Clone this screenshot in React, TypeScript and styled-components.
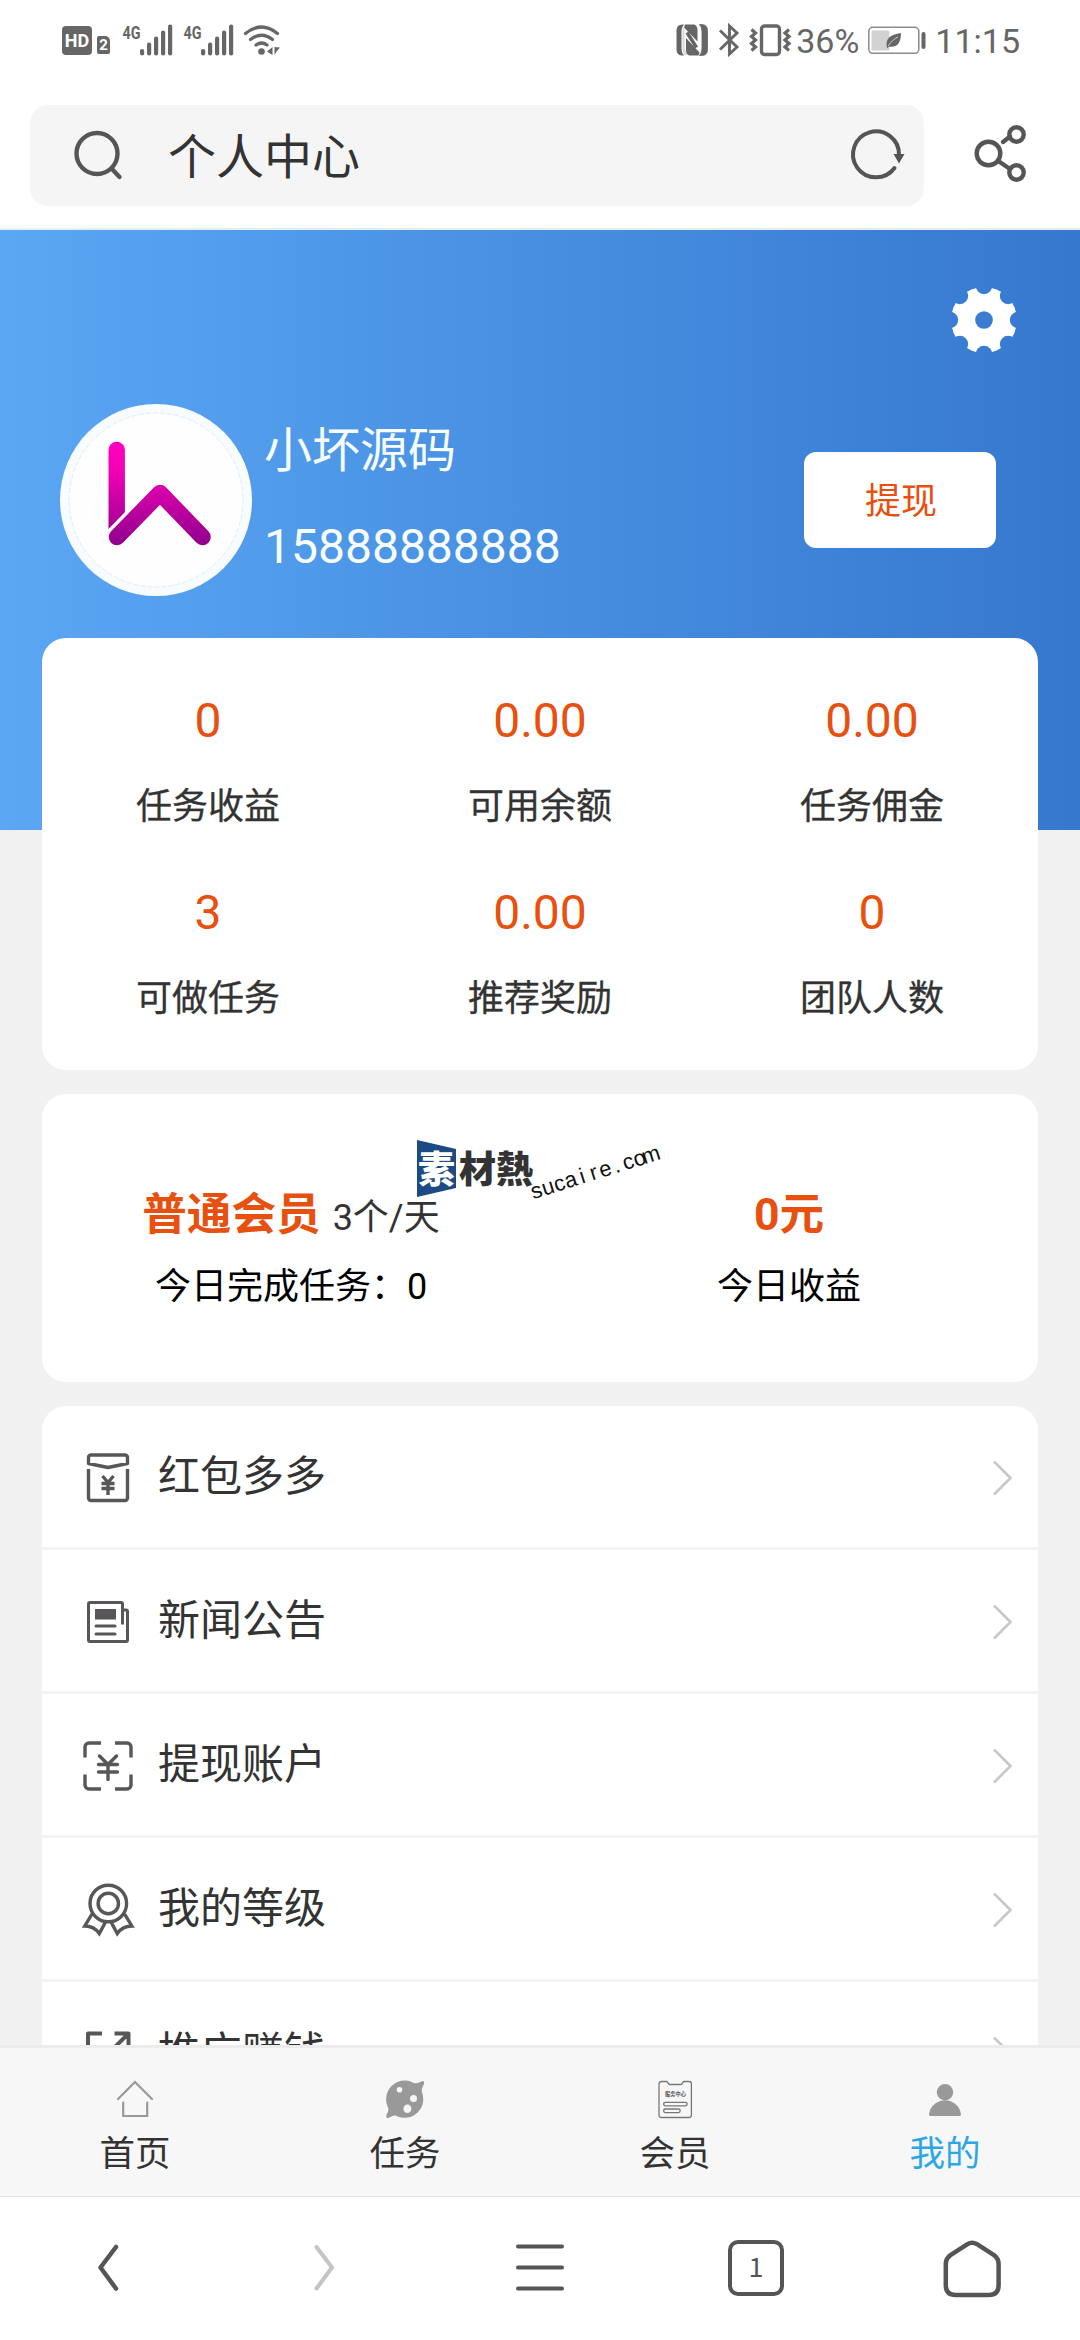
import React from "react";
import styled, { createGlobalStyle } from "styled-components";

const INK = "#333333";
const ACCENT = "#e8500f";
const STATUS = "#666666";
const LINE_ICON = "#585659";
const CHROME = "#555555";

const GlobalStyle = createGlobalStyle`
  * { box-sizing: border-box; }
  body { margin: 0; background: #fff; }
  svg { display: block; flex: none; overflow: visible; }
`;

const Screen = styled.div`
  width: 1080px;
  height: 2340px;
  display: flex;
  flex-direction: column;
  overflow: hidden;
  background: #fff;
  color: ${INK};
  font-family: Roboto, "Noto Sans CJK SC", sans-serif;
`;

/* ---------- status bar ---------- */

const StatusBar = styled.div`
  height: 80px;
  flex: none;
  display: flex;
  align-items: center;
  justify-content: space-between;
  padding: 0 60px 0 62px;
  color: ${STATUS};
`;

const StatusGroup = styled.div<{ $gap: number }>`
  display: flex;
  align-items: center;
  gap: ${(p) => p.$gap}px;
`;

const HdBadge = styled.span`
  width: 30px;
  height: 29px;
  margin: 1px -5px 0 0;
  border-radius: 4px;
  background: ${STATUS};
  color: #fff;
  font: 700 18px/29px Roboto, sans-serif;
  text-align: center;
`;

const SimBadge = styled.span`
  width: 13px;
  height: 18px;
  margin: 10px 2px 0 0;
  border-radius: 2px 5px 2px 2px;
  background: ${STATUS};
  color: #fff;
  font: 700 15px/18px Roboto, sans-serif;
  text-align: center;
`;

const StatusText = styled.span`
  font-size: 34px;
  line-height: 40px;
  padding-top: 2px;
  white-space: nowrap;
`;

const Signal = () => (
  <svg width="51" height="32" viewBox="0 0 51 32" fill={STATUS}>
    <text x="0.500" y="14.500" fontFamily="Roboto, sans-serif" fontWeight="700" fontSize="19" textLength="18" lengthAdjust="spacingAndGlyphs">
      4G
    </text>
    <rect x="18" y="25" width="4.200" height="6.500" rx="2" />
    <rect x="25" y="18.500" width="4.200" height="13" rx="2" />
    <rect x="32" y="12.500" width="4.200" height="19" rx="2" />
    <rect x="39" y="6.500" width="4.200" height="25" rx="2" />
    <rect x="46" y="0.500" width="4.200" height="31" rx="2" />
  </svg>
);

const Wifi = () => (
  <svg width="38" height="32" viewBox="0 0 38 32" fill="none" stroke={STATUS} strokeWidth="3.200" strokeLinecap="round">
    <path d="M1.500 9.500Q17.500 -3.500 33.500 9.500" />
    <path d="M6.500 15.500Q17.500 7 28.500 15.500" />
    <path d="M12 21Q17.500 17 23 21" />
    <circle cx="17.500" cy="27.500" r="3.300" fill={STATUS} stroke="none" />
    <path d="M28.500 23v8l-5.500-3.500zM30.500 23v8l2-3.500l3.500-4z" fill={STATUS} stroke="none" />
  </svg>
);

const Nfc = () => (
  <svg width="32" height="32" viewBox="0 0 32 32">
    <path d="M6.500 0.500H8Q5.500 3 5.500 8V24Q5.500 29 8 31.500H6.500Q0.500 31.500 0.500 25.500V6.500Q0.500 0.500 6.500 0.500z" fill={STATUS} />
    <path d="M23.500 0.500H25.500Q31.500 0.500 31.500 6.500V25.500Q31.500 31.500 25.500 31.500H23.500Q26 29 26 24V8Q26 3 23.500 0.500z" fill={STATUS} stroke={STATUS} strokeWidth="0.800" />
    <path d="M9 0.500H18.500Q21.500 2 21.500 6V17.500L8 3.500z" fill={STATUS} />
    <path d="M22.500 31.500H13Q10 30 10 26V14L23.500 28.500z" fill={STATUS} />
    <path d="M6.500 3.500V25Q7 29.500 9 31H13Q8.500 28 8.500 23V5z" fill={STATUS} opacity="0.250" />
    <path d="M11 8.500L20.500 23.500" stroke={STATUS} strokeWidth="3.500" />
  </svg>
);

const Bluetooth = () => (
  <svg width="20" height="32" viewBox="0 0 20 32" fill="none" stroke={STATUS} strokeWidth="2.900">
    <path d="M1 6.500L18 23L10.500 30V2L18 9L1 25.500" />
  </svg>
);

const Vibrate = () => (
  <svg width="41" height="32" viewBox="0 0 41 32" fill="none" stroke={STATUS}>
    <rect x="11.500" y="2" width="18" height="28.500" rx="3" strokeWidth="3.400" />
    <path d="M1.500 5.500l4 3.500l-4 3.500l4 3.500l-4 3.500l4 3.500l-4 3.500" strokeWidth="3.200" />
    <path d="M39 5.500l-4 3.500l4 3.500l-4 3.500l4 3.500l-4 3.500l4 3.500" strokeWidth="3.200" />
  </svg>
);

const Battery = () => (
  <svg width="58" height="32" viewBox="0 0 58 32">
    <rect x="0.800" y="3.300" width="50" height="26" rx="4" fill="#fff" stroke="#8b8b8b" strokeWidth="1.500" />
    <rect x="3.500" y="6.500" width="18" height="20" rx="1.500" fill="#d2d2d2" />
    <path d="M19 24c-2-10 3-13 14-15c0 11-5 15-12 13.500l-2 2z" fill={STATUS} />
    <path d="M20 22q6-8 10-9" stroke="#d8d8d8" strokeWidth="0.900" fill="none" />
    <rect x="53.500" y="8" width="4" height="17" rx="2" fill={STATUS} />
  </svg>
);

const StatusIcons = styled.div`
  display: flex;
  gap: 11px;
  margin-right: -4px;
`;

/* ---------- address bar ---------- */

const AddressBar = styled.div`
  flex: none;
  height: 150px;
  padding: 25px 30px 22px;
  border-bottom: 2px solid #e3effa;
  display: flex;
  align-items: flex-start;
`;

const AddressField = styled.div`
  width: 894px;
  height: 101px;
  border-radius: 18px;
  background: #f5f5f5;
  display: flex;
  align-items: center;
  padding: 0 18px 0 43px;
`;

const AddressText = styled.span`
  margin-left: 43px;
  flex: 1;
  font-size: 48px;
  line-height: 60px;
  padding-top: 5px;
`;

const ShareButton = styled.div`
  margin: 19px 0 0 49px;
`;

const SearchIcon = () => (
  <svg width="52" height="52" viewBox="0 0 52 52" fill="none" stroke={CHROME} strokeWidth="4.400" strokeLinecap="round">
    <circle cx="24" cy="23.500" r="20.500" />
    <path d="M39 39L46.500 47" />
  </svg>
);

const ReloadIcon = () => (
  <svg width="56" height="52" viewBox="0 0 56 52" fill="none" stroke={CHROME} strokeWidth="4" strokeLinecap="round">
    <path d="M44.500 38A23 23 0 1 1 49 25" />
    <path d="M43.500 24h11l-5.500 9.500z" fill={CHROME} stroke="none" />
  </svg>
);

const ShareIcon = () => (
  <svg width="56" height="60" viewBox="0 0 56 60" fill="none" stroke={CHROME} strokeWidth="4.400" strokeLinecap="round">
    <circle cx="15.500" cy="29.500" r="11.800" />
    <circle cx="43.500" cy="10.500" r="7.200" />
    <circle cx="43.500" cy="48.500" r="7.200" />
    <path d="M30 18l7-5.500M26 37.500l11 7.500" />
  </svg>
);

/* ---------- page ---------- */

const Page = styled.main`
  flex: 1;
  min-height: 0;
  overflow: hidden;
  background: #f1f1f1;
`;

const Hero = styled.section`
  height: 600px;
  padding-top: 56px;
  background: linear-gradient(90deg, #5ba7f4 0%, #478fe1 50%, #3678ce 100%);
`;

const HeroTools = styled.div`
  display: flex;
  justify-content: flex-end;
  padding-right: 62px;
  margin-bottom: 50px;
`;

const Profile = styled.div`
  height: 192px;
  padding: 0 84px 0 60px;
  display: flex;
  align-items: center;
`;

const ProfileText = styled.div`
  flex: 1;
  margin-left: 12px;
  display: flex;
  flex-direction: column;
  gap: 36px;
  padding-bottom: 2px;
  color: #f8feff;
  font-size: 48px;
  line-height: 60px;
`;

const WithdrawButton = styled.button`
  width: 192px;
  height: 96px;
  padding: 0 0 5px 2px;
  border: 0;
  border-radius: 12px;
  background: #fff;
  color: ${ACCENT};
  font-family: inherit;
  font-size: 36px;
`;

const GearIcon = () => (
  <svg width="68" height="68" viewBox="-34 -34 68 68">
    <mask id="gear-cut">
      <circle r="33" fill="#fff" />
      <circle r="8.800" fill="#000" />
      {[0, 45, 90, 135, 180, 225, 270, 315].map((a) => (
        <circle key={a} cx="0" cy="-34" r="8.200" fill="#000" transform={`rotate(${a})`} />
      ))}
    </mask>
    <rect x="-34" y="-34" width="68" height="68" fill="#fff" mask="url(#gear-cut)" />
  </svg>
);

const Avatar = () => (
  <svg width="192" height="192" viewBox="0 0 192 192">
    <defs>
      <linearGradient id="brand" gradientUnits="userSpaceOnUse" x1="0" y1="38" x2="0" y2="142">
        <stop offset="0" stopColor="#ff00c0" />
        <stop offset="0.250" stopColor="#f400b6" />
        <stop offset="1" stopColor="#8e008c" />
      </linearGradient>
    </defs>
    <circle cx="96" cy="96" r="96" fill="#f9fcff" />
    <circle cx="96" cy="96" r="87" fill="#fffeff" stroke="#d5e6f0" strokeWidth="0.800" strokeDasharray="5 2" />
    <path d="M48.500 46a8.200 8.200 0 0 1 16.400 0V109L48.500 126z" fill="url(#brand)" />
    <path d="M57 133L100 89L142.500 133" fill="none" stroke="url(#brand)" strokeWidth="16.500" strokeLinecap="round" strokeLinejoin="round" />
    <path d="M48 126.500L65.500 108.500" stroke="#fff" strokeWidth="1.300" />
  </svg>
);

const Cards = styled.div`
  margin: -192px 42px 0;
  display: flex;
  flex-direction: column;
  gap: 24px;
`;

const Card = styled.section`
  border-radius: 24px;
  background: #fff;
`;

const StatsCard = styled(Card)`
  height: 432px;
  padding: 24px 0;
  display: grid;
  grid-template-columns: repeat(3, 1fr);
  grid-auto-rows: 192px;
`;

const Stat = styled.div`
  padding-top: 29px;
  display: flex;
  flex-direction: column;
  align-items: center;
  gap: 30px;
`;

const StatValue = styled.span`
  color: ${ACCENT};
  font-size: 48px;
  line-height: 60px;
`;

const StatLabel = styled.span`
  font-size: 36px;
  line-height: 52px;
  -webkit-text-stroke: 0.300px ${INK};
`;

const MemberCard = styled(Card)`
  position: relative;
  height: 288px;
  padding-top: 91px;
  display: grid;
  grid-template-columns: 1fr 1fr;
`;

const MemberCell = styled.div`
  display: flex;
  flex-direction: column;
  align-items: center;
  gap: 16px;
`;

const MemberHead = styled.div`
  display: flex;
  align-items: baseline;
  gap: 12px;
  height: 60px;
  line-height: 60px;
`;

const MemberTitle = styled.strong`
  color: ${ACCENT};
  font-size: 44.600px;
  font-weight: 700;
`;

const MemberQuota = styled.span`
  font-size: 36px;
`;

const MemberNote = styled.span`
  color: #000;
  font-size: 36px;
  line-height: 52px;
`;

/* stamp lying over the member card */
const Stamp = styled.div`
  position: absolute;
  left: 375px;
  top: 46px;
  display: flex;
  align-items: flex-start;
  font-family: "Noto Sans CJK TC", "Noto Sans CJK SC", sans-serif;
  font-weight: 900;
  font-size: 37px;
  line-height: 55px;
`;

const StampTile = styled.span`
  width: 39px;
  height: 57px;
  background: #1c4b83;
  color: #fff;
  text-align: center;
  clip-path: polygon(0 0, 100% 16%, 100% 84%, 0 100%);
`;

const StampName = styled.span`
  margin-left: 3px;
`;

const StampSite = styled.span`
  display: flex;
  margin: 38px 0 0 2px;
  color: #111;
  font: 400 22px/28px "Liberation Sans", sans-serif;
  transform: rotate(-17.500deg);
  transform-origin: 0 100%;
`;

const StampLetter = styled.span`
  width: 12px;
  display: flex;
  justify-content: center;
`;

const MenuCard = styled(Card)`
  overflow: hidden;
`;

const MenuRow = styled.div`
  height: 144px;
  padding: 0 24px 0 40px;
  border-bottom: 3px solid #f3f3f3;
  display: flex;
  align-items: center;

  svg {
    margin-top: 3px;
  }
`;

const MenuText = styled.span`
  flex: 1;
  margin-left: 24px;
  font-size: 42px;
  line-height: 60px;
`;

const Chevron = () => (
  <svg width="22" height="36" viewBox="0 0 22 36" fill="none" stroke="#c8c8c8" strokeWidth="2.600">
    <path d="M2 1.500L18.500 18L2 34.500" />
  </svg>
);

const MenuIcon = ({ children }: { children: React.ReactNode }) => (
  <svg width="52" height="52" viewBox="0 0 52 52" fill="none" stroke={LINE_ICON} strokeWidth="3.400" strokeLinejoin="round">
    {children}
  </svg>
);

const menu = [
  {
    label: "红包多多",
    icon: (
      <MenuIcon>
        <path d="M6.500 11.500V5.500a2.500 2.500 0 0 1 2.500-2.500H43a2.500 2.500 0 0 1 2.500 2.500V11.500L26 15.500z" />
        <path d="M6.500 17V46a2.500 2.500 0 0 0 2.500 2.500H43a2.500 2.500 0 0 0 2.500-2.500V17" />
        <path d="M20.500 24L26 30.500L31.500 24M19.500 31.500H32.500M19.500 36.500H32.500M26 30V43" />
      </MenuIcon>
    ),
  },
  {
    label: "新闻公告",
    icon: (
      <MenuIcon>
        <path d="M40.500 28.500V8a1.500 1.500 0 0 0-1.500-1.500H8A1.500 1.500 0 0 0 6.500 8V44A1.500 1.500 0 0 0 8 45.500H44A1.500 1.500 0 0 0 45.500 44V15.500a1.500 1.500 0 0 0-1.500-1.500H40.500" strokeWidth="3" />
        <rect x="13" y="13" width="21" height="10.500" fill={LINE_ICON} stroke="none" />
        <path d="M14 30H33M14 38H33" strokeWidth="3" strokeLinecap="round" />
      </MenuIcon>
    ),
  },
  {
    label: "提现账户",
    icon: (
      <MenuIcon>
        <path d="M3 17.500V7a4 4 0 0 1 4-4H19M33 3H45a4 4 0 0 1 4 4V17.500M49 34.500V45a4 4 0 0 1-4 4H33M19 49H7a4 4 0 0 1-4-4V34.500" />
        <path d="M17.500 16L26 24.500L34.500 16M16.500 24.500H35.500M16.500 32H35.500M26 24.500V39.500" strokeLinecap="round" />
      </MenuIcon>
    ),
  },
  {
    label: "我的等级",
    icon: (
      <MenuIcon>
        <circle cx="26.300" cy="19.500" r="18.300" />
        <circle cx="26.300" cy="19.500" r="10.200" />
        <path d="M10 30L2.800 42Q12 42 17.300 49.500L23.300 38.500M42.600 30L49.800 42Q40.600 42 35.300 49.500L29.300 38.500" strokeLinejoin="miter" />
      </MenuIcon>
    ),
  },
  {
    label: "推广赚钱",
    icon: (
      <MenuIcon>
        <path d="M20 5.500H6V46.500H46.500V33M32.500 5.500H46.500V19M46 6L27 25" strokeWidth="4" />
      </MenuIcon>
    ),
  },
];

/* ---------- tab bar ---------- */

const TabBar = styled.nav`
  flex: none;
  height: 152px;
  border-top: 3px solid #ececec;
  border-bottom: 1px solid #dedede;
  background: #f7f7f7;
  display: grid;
  grid-template-columns: repeat(4, 1fr);
`;

const Tab = styled.div<{ $active?: boolean }>`
  padding-top: 31px;
  display: flex;
  flex-direction: column;
  align-items: center;
  gap: 13px;
  color: ${(p) => (p.$active ? "#2ca7e6" : INK)};
  font-size: 35.500px;
  line-height: 44px;
`;

const tabs = [
  {
    label: "首页",
    icon: (
      <svg width="40" height="40" viewBox="0 0 40 40" fill="none" stroke="#999" strokeWidth="2.200" strokeLinecap="round">
        <path d="M3 20L20 3L37 20M8.200 23.500V37H32.200V23.500" />
      </svg>
    ),
  },
  {
    label: "任务",
    icon: (
      <svg width="40" height="40" viewBox="0 0 40 40" fill="#999">
        <circle cx="19.700" cy="20.200" r="18.600" />
        <path d="M28 4.500Q33 4.500 37 2.200Q39.500 1.500 39 5Q37 8 36.500 13zM11.500 36Q7 36.500 4 38.800Q0.500 40 1.500 35.500Q4 32 3.500 27z" />
        <g fill="#f7f7f7">
          <circle cx="14.500" cy="10.700" r="2.800" />
          <circle cx="28.500" cy="19.500" r="3.500" />
          <ellipse cx="22.400" cy="29.700" rx="4" ry="4.300" />
        </g>
      </svg>
    ),
  },
  {
    label: "会员",
    icon: (
      <svg width="40" height="40" viewBox="0 0 40 40" fill="none" stroke="#777" strokeWidth="1.300">
        <path d="M4 5Q4 2.500 6.500 2.500H11.500Q12.500 2.500 13 4Q13.500 5.500 15 5.500H25.500Q27 5.500 27.500 4Q28 2.500 29 2.500H34Q36.400 2.500 36.400 5V36Q36.400 38.500 34 38.500H6.500Q4 38.500 4 36z" />
        <text x="20.500" y="16.900" textAnchor="middle" fontSize="5.200" fontWeight="700" fill="#555" stroke="none" fontFamily='"Noto Sans CJK SC", sans-serif'>
          服务中心
        </text>
        <rect x="8.600" y="23.300" width="23.600" height="3.600" rx="1.800" />
        <rect x="8.600" y="30" width="16.600" height="3.600" rx="1.800" />
      </svg>
    ),
  },
  {
    label: "我的",
    active: true,
    icon: (
      <svg width="40" height="40" viewBox="0 0 40 40" fill="#999">
        <circle cx="20" cy="13.300" r="8.200" />
        <path d="M15 22Q20 20.500 25 22Q35 25.500 36 35.500Q36 37 34.500 37H5.500Q4 37 4 35.500Q5 25.500 15 22z" />
      </svg>
    ),
  },
];

/* ---------- browser navigation ---------- */

const BrowserNav = styled.nav`
  flex: none;
  height: 143px;
  padding-bottom: 2px;
  background: #fff;
  display: grid;
  grid-template-columns: repeat(5, 1fr);
  place-items: center;
`;

const TabCount = styled.span`
  width: 56px;
  height: 56px;
  border: 4.500px solid ${CHROME};
  border-radius: 10px;
  color: ${CHROME};
  font: 400 27px/43px "Noto Sans CJK SC", sans-serif;
  text-align: center;
`;

const NavIcon = ({ color = CHROME, d, width = 4.5 }: { color?: string; d: string; width?: number }) => (
  <svg width="60" height="60" viewBox="0 0 60 60" fill="none" stroke={color} strokeWidth={width} strokeLinecap="round" strokeLinejoin="round">
    <path d={d} />
  </svg>
);

const stats = [
  ["0", "任务收益"],
  ["0.00", "可用余额"],
  ["0.00", "任务佣金"],
  ["3", "可做任务"],
  ["0.00", "推荐奖励"],
  ["0", "团队人数"],
];

export default function App() {
  return (
    <Screen>
      <GlobalStyle />
      <StatusBar>
        <StatusGroup $gap={10}>
          <HdBadge>HD</HdBadge>
          <SimBadge>2</SimBadge>
          <Signal />
          <Signal />
          <Wifi />
        </StatusGroup>
        <StatusGroup $gap={9}>
          <StatusIcons>
            <Nfc />
            <Bluetooth />
            <Vibrate />
          </StatusIcons>
          <StatusText>36%</StatusText>
          <Battery />
          <StatusText>11:15</StatusText>
        </StatusGroup>
      </StatusBar>

      <AddressBar>
        <AddressField>
          <SearchIcon />
          <AddressText>个人中心</AddressText>
          <ReloadIcon />
        </AddressField>
        <ShareButton>
          <ShareIcon />
        </ShareButton>
      </AddressBar>

      <Page>
        <Hero>
          <HeroTools>
            <GearIcon />
          </HeroTools>
          <Profile>
            <Avatar />
            <ProfileText>
              <span>小坏源码</span>
              <span>15888888888</span>
            </ProfileText>
            <WithdrawButton>提现</WithdrawButton>
          </Profile>
        </Hero>

        <Cards>
          <StatsCard>
            {stats.map(([value, label]) => (
              <Stat key={label}>
                <StatValue>{value}</StatValue>
                <StatLabel>{label}</StatLabel>
              </Stat>
            ))}
          </StatsCard>

          <MemberCard>
            <MemberCell>
              <MemberHead>
                <MemberTitle>普通会员</MemberTitle>
                <MemberQuota>3个/天</MemberQuota>
              </MemberHead>
              <MemberNote>今日完成任务：0</MemberNote>
            </MemberCell>
            <MemberCell>
              <MemberHead>
                <MemberTitle>0元</MemberTitle>
              </MemberHead>
              <MemberNote>今日收益</MemberNote>
            </MemberCell>
            <Stamp>
              <StampTile>素</StampTile>
              <StampName>材熱</StampName>
              <StampSite>
                {"sucaire.com".split("").map((c, i) => (
                  <StampLetter key={i}>{c}</StampLetter>
                ))}
              </StampSite>
            </Stamp>
          </MemberCard>

          <MenuCard>
            {menu.map((m) => (
              <MenuRow key={m.label}>
                {m.icon}
                <MenuText>{m.label}</MenuText>
                <Chevron />
              </MenuRow>
            ))}
          </MenuCard>
        </Cards>
      </Page>

      <TabBar>
        {tabs.map((t) => (
          <Tab key={t.label} $active={t.active}>
            {t.icon}
            {t.label}
          </Tab>
        ))}
      </TabBar>

      <BrowserNav>
        <NavIcon d="M38 9L22.500 29.500L38 50.500" />
        <NavIcon color="#c4c4c4" d="M22.500 9L38 29.500L22.500 50.500" width={4} />
        <NavIcon d="M8 8.500H52M8 29.500H52M8 50.500H52" width={4} />
        <TabCount>1</TabCount>
        <NavIcon d="M25.500 6.200L8.500 17.200Q3.800 20.500 3.800 26V47Q3.800 57 13.500 57H47Q56.600 57 56.600 47V26Q56.600 20.500 52 17.200L35 6.200Q30.200 3.200 25.500 6.200z" />
      </BrowserNav>
    </Screen>
  );
}
